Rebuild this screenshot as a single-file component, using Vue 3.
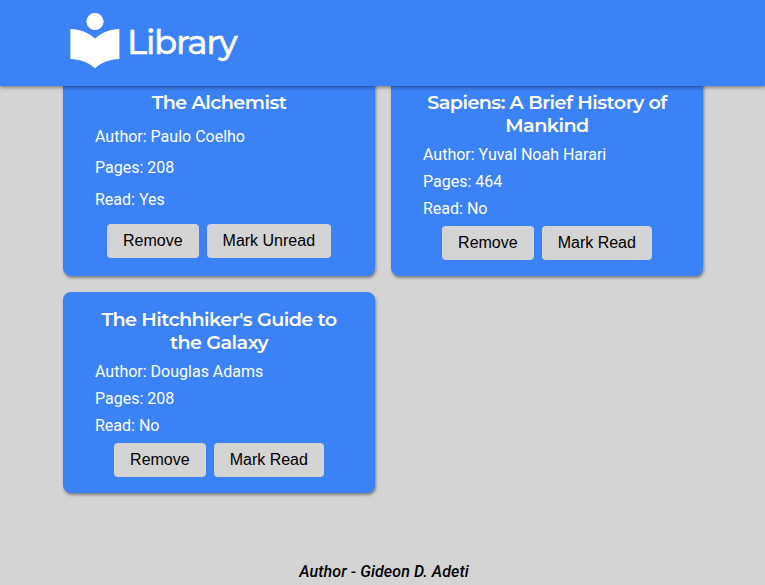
<script setup>
import { ref } from 'vue'

const books = ref([
  { title: ['The Alchemist'], author: 'Paulo Coelho', pages: 208, read: true },
  { title: ['Sapiens: A Brief History of', 'Mankind'], author: 'Yuval Noah Harari', pages: 464, read: false },
  { title: ["The Hitchhiker's Guide to", 'the Galaxy'], author: 'Douglas Adams', pages: 208, read: false },
])

const remove = (i) => books.value.splice(i, 1)
</script>

<template>
  <div class="page">
    <header class="header">
      <svg class="logo" viewBox="0 0 50 56" aria-hidden="true">
        <circle cx="25" cy="8.5" r="8.6" />
        <path d="M.4 16C9.8 16 18.4 19.5 25 25.6 31.6 19.5 40 16 49.4 16v30C40 46 31.6 49.5 25 55.2 18.4 49.5 9.8 46 .4 46Z" />
      </svg>
      <h1 class="brand">Library</h1>
    </header>
    <main class="books">
      <article v-for="(book, i) in books" :key="i" class="card">
        <h2 class="title">
          <span v-for="line in book.title" :key="line" class="line">{{ line }}</span>
        </h2>
        <p>Author: {{ book.author }}</p>
        <p>Pages: {{ book.pages }}</p>
        <p>Read: {{ book.read ? 'Yes' : 'No' }}</p>
        <div class="actions">
          <button @click="remove(i)">Remove</button>
          <button @click="book.read = !book.read">{{ book.read ? 'Mark Unread' : 'Mark Read' }}</button>
        </div>
      </article>
    </main>
    <footer class="footer">Author - Gideon D. Adeti</footer>
  </div>
</template>

<style>
body {
  background: #d4d4d4;
}
</style>

<style scoped>
.page {
  display: flex;
  flex-direction: column;
  height: 585px;
  overflow: hidden;
  background: #d4d4d4;
  font-family: Roboto, sans-serif;
  font-size: 16px;
}
.header {
  display: flex;
  flex: none;
  align-items: center;
  gap: 7px;
  height: 86px;
  box-sizing: border-box;
  padding: 0 70px 5px;
  background: #3b82f6;
  color: #fff;
  box-shadow: 0 1px 4px rgba(0, 0, 0, 0.5);
  z-index: 1;
}
.logo {
  width: 50px;
  height: 56px;
  fill: #fff;
}
.brand {
  margin: 2px 0 0;
  font: 500 34px/40px Montserrat, Inter, sans-serif;
  letter-spacing: -1.3px;
  -webkit-text-stroke: 0.3px #fff;
}
.books {
  display: grid;
  grid-template-columns: 312px 312px;
  grid-auto-rows: 201px;
  gap: 16px;
  margin-top: -11px;
  padding: 0 63px;
}
.card {
  display: grid;
  gap: 8px;
  box-sizing: border-box;
  padding: 16px 32px;
  border-radius: 8px;
  background: #3b82f6;
  color: #fff;
  box-shadow: 1px 2px 3px rgba(0, 0, 0, 0.4);
}
.title {
  margin: 0;
  font: 600 19.2px/23px Montserrat, Inter, sans-serif;
  letter-spacing: -0.55px;
  text-align: center;
}
.line {
  display: block;
  white-space: nowrap;
}
p {
  margin: 0;
  line-height: 19px;
}
.actions {
  display: flex;
  align-items: center;
  justify-content: center;
  gap: 8px;
}
button {
  height: 34px;
  padding: 0 16px;
  border: 0;
  border-radius: 4px;
  background: #d4d4d4;
  color: #000;
  font: 16px "Liberation Sans", Arial, sans-serif;
}
.footer {
  margin-top: auto;
  padding: 0 0 4px 3px;
  line-height: 19px;
  text-align: center;
  font-style: italic;
  font-weight: 500;
  letter-spacing: 0.1px;
}
</style>
